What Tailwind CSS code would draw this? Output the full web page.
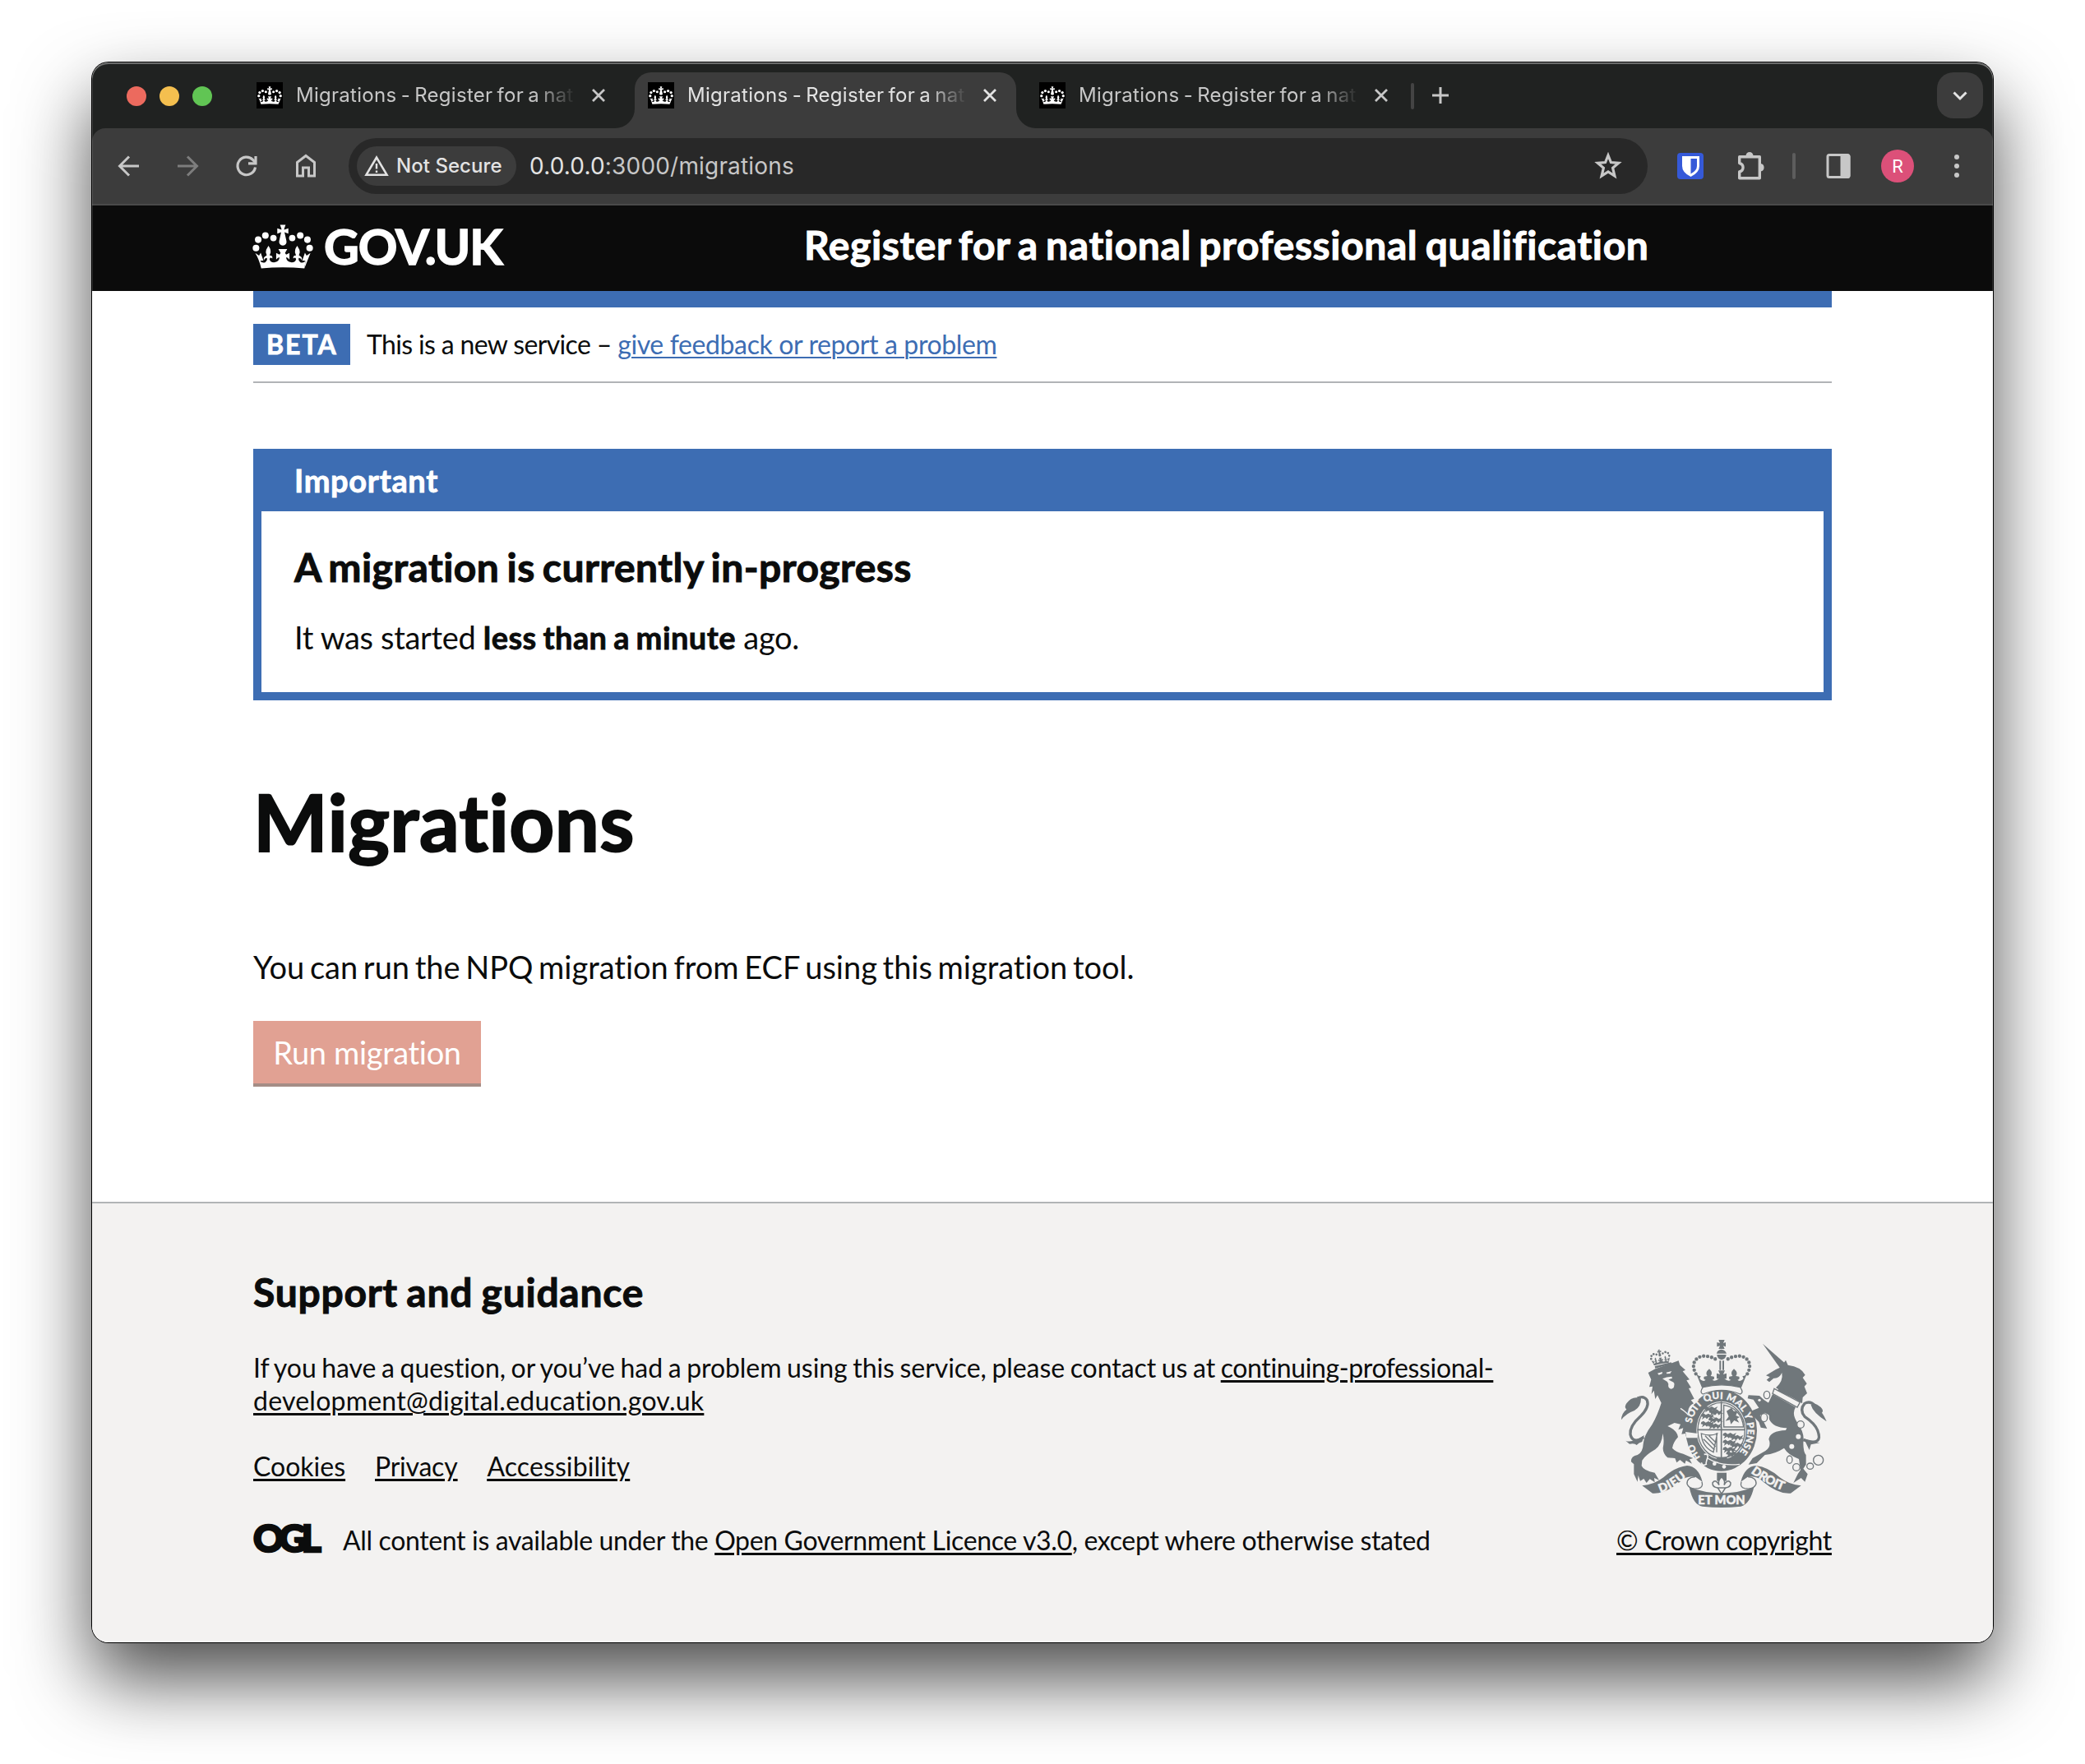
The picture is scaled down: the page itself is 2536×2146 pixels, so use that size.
<!DOCTYPE html>
<html lang="en">
<head>
<meta charset="utf-8">
<title>Migrations - Register for a national professional qualification</title>
<script src="https://cdn.jsdelivr.net/npm/@tailwindcss/browser@4"></script>
</head>
<body class="bg-white overflow-hidden">
<!-- shared symbols -->
<svg width="0" height="0" class="absolute">
  <symbol id="crown" viewBox="22 39 220 160">
    <g fill="currentColor">
      <circle cx="35" cy="124" r="12"/><circle cx="43" cy="94" r="12"/><circle cx="69" cy="79" r="12"/><circle cx="98" cy="88" r="11.5"/>
      <circle cx="166" cy="88" r="11.5"/><circle cx="195" cy="79" r="12"/><circle cx="221" cy="94" r="12"/><circle cx="229" cy="124" r="12"/>
      <path d="M122 40h20l-5 14v4l15-5v19l-14-5 7 31a13.500 13.500 0 1 1-26 0l7-31-14 5V53l15 5v-4z"/>
      <path d="M54 198Q132 190 210 198L214 172Q206 180 196 176Q186 168 190 160Q198 160 200 168Q204 158 194 153L190 150Q196 140 192 130L184 116Q172 132 178 146L180 151Q168 150 170 162Q178 156 180 164Q178 176 164 176Q144 174 144 158Q150 158 156 166V142L144 148L140 142L148 128H116L124 142L120 148L108 142V166Q114 158 120 158Q120 174 100 176Q86 176 84 164Q86 156 94 162Q96 150 84 151L86 146Q92 132 80 116L72 130Q68 140 74 150L70 153Q60 158 64 168Q66 160 74 160Q78 168 68 176Q58 180 50 172Q54 168 62 170L52 141L46 152L32 142Q46 164 54 198Z"/>
      <path d="M210 198L232 142L218 152L212 141L202 170Q210 168 214 172Z"/>
    </g>
  </symbol>
  <symbol id="x" viewBox="0 0 32 32"><path d="M9 9L23 23M23 9L9 23" stroke="currentColor" stroke-width="2.800" fill="none"/></symbol>
</svg>

<div class="w-[2536px] h-[2146px] pt-[76px] pl-[112px] overflow-hidden">
<div class="w-[2312px] h-[1922px] rounded-[20px] shadow-[0_0_0_1px_#000,0_45px_90px_rgba(0,0,0,0.7)] bg-white">
<div class="relative w-full h-full rounded-[20px] overflow-hidden flex flex-col font-[Lato,sans-serif] text-[#0b0c0c]">

  <!-- tab strip -->
  <div class="h-20 bg-[#202221] flex items-center pl-[42px] font-[Inter,sans-serif] text-[24px] tracking-[0.28px] [word-spacing:-1.8px] text-[#c7c7c7] shrink-0">
    <div class="flex gap-4 pt-[2px]">
      <div class="size-6 rounded-full bg-[#ec6a5e]"></div>
      <div class="size-6 rounded-full bg-[#f4bf4f]"></div>
      <div class="size-6 rounded-full bg-[#61c554]"></div>
    </div>
    <div class="ml-[38px] flex gap-3 self-end">
      <div class="w-[464px] h-[68px] pl-4 pb-3 flex items-center">
        <div class="size-8 bg-black flex items-center justify-center text-white"><svg class="w-[30px] h-[22px]"><use href="#crown"/></svg></div>
        <div class="ml-[16px] w-[337px] whitespace-nowrap [mask-image:linear-gradient(to_right,#000_86%,transparent_101%)]">Migrations - Register for a nat</div>
        <svg class="size-8 ml-[15px]"><use href="#x"/></svg>
      </div>
      <div class="relative w-[464px] h-[68px] pl-4 pb-3 flex items-center bg-[#3c3c3c] rounded-t-[20px] text-[#e3e3e3]">
        <svg class="absolute -left-6 bottom-0 size-6" viewBox="0 0 24 24"><path d="M24 0V24H0A24 24 0 0 0 24 0Z" fill="#3c3c3c"/></svg>
        <svg class="absolute -right-6 bottom-0 size-6" viewBox="0 0 24 24"><path d="M0 0V24H24A24 24 0 0 1 0 0Z" fill="#3c3c3c"/></svg>
        <div class="size-8 bg-black flex items-center justify-center text-white"><svg class="w-[30px] h-[22px]"><use href="#crown"/></svg></div>
        <div class="ml-[16px] w-[337px] whitespace-nowrap [mask-image:linear-gradient(to_right,#000_86%,transparent_101%)]">Migrations - Register for a nat</div>
        <svg class="size-8 ml-[15px]"><use href="#x"/></svg>
      </div>
      <div class="w-[464px] h-[68px] pl-4 pb-3 flex items-center">
        <div class="size-8 bg-black flex items-center justify-center text-white"><svg class="w-[30px] h-[22px]"><use href="#crown"/></svg></div>
        <div class="ml-[16px] w-[337px] whitespace-nowrap [mask-image:linear-gradient(to_right,#000_86%,transparent_101%)]">Migrations - Register for a nat</div>
        <svg class="size-8 ml-[15px]"><use href="#x"/></svg>
      </div>
    </div>
    <div class="ml-1 w-1 h-8 rounded-full bg-[#444] mt-[2px]"></div>
    <svg class="ml-[16px] size-8" viewBox="0 0 32 32"><path d="M16 6V26M6 16H26" stroke="#c7c7c7" stroke-width="3" fill="none"/></svg>
    <div class="ml-auto mr-3 w-14 h-14 rounded-[20px] bg-[#3c3c3c] flex items-center justify-center">
      <svg class="size-8" viewBox="0 0 32 32"><path d="M8.500 12.500L16 20L23.500 12.500" stroke="#e3e3e3" stroke-width="3" fill="none"/></svg>
    </div>
  </div>

  <!-- toolbar -->
  <div class="h-[94px] bg-[#202221] shrink-0">
  <div class="h-full bg-[#3c3c3c] rounded-t-[16px] border-b-2 border-[#4a4a4a] flex items-center pl-7 text-[#c7c7c7] font-[Inter,sans-serif]">
    <div class="flex gap-10">
      <svg class="size-8" viewBox="0 0 32 32" fill="none" stroke="currentColor" stroke-width="3"><path d="M29 16H6M17 4.500L5.500 16L17 27.500"/></svg>
      <svg class="size-8 text-[#7d7d7d]" viewBox="0 0 32 32" fill="none" stroke="currentColor" stroke-width="3"><path d="M4 16H27M16 4.500L27.500 16L16 27.500"/></svg>
      <svg class="size-8" viewBox="0 0 32 32" fill="none" stroke="currentColor" stroke-width="3.200"><path d="M26.500 17.500A10.800 10.800 0 1 1 23.500 8.300L26.500 11.500"/><path d="M27 4V12.800H18"/></svg>
      <svg class="size-8" viewBox="0 0 32 32" fill="none" stroke="currentColor" stroke-width="3"><path d="M5.500 28V11.500L16 3.500L26.500 11.500V28H19.500V18H12.500V28Z"/></svg>
    </div>
    <div class="ml-9 w-[1580px] h-[68px] rounded-full bg-[#282828] flex items-center pl-[10px] pr-[31px]">
      <div class="w-[194px] h-12 rounded-full bg-[#3c3c3c] flex items-center pl-2 text-[#e3e3e3]">
        <svg class="w-8 h-8" viewBox="0 0 32 32" fill="none" stroke="currentColor" stroke-width="2.600"><path d="M3.500 26.700H28.500L16 5.500Z"/><path d="M16 13V19.500M16 21.500V24" stroke-width="2.400"/></svg>
        <span class="ml-[8px] text-[24px] tracking-[0.05px] font-medium whitespace-nowrap">Not Secure</span>
      </div>
      <div class="ml-4 text-[28px] tracking-[0.18px] whitespace-nowrap"><span class="text-[#e3e3e3]">0.0.0.0</span>:3000/migrations</div>
      <svg class="ml-auto size-[34px]" viewBox="0 0 34 34" fill="none" stroke="currentColor" stroke-width="3.200"><path d="M17 4L20.400 12.600L29.700 13.300L22.600 19.300L24.900 29L17 23.800L9.100 29L11.400 19.300L4.300 13.300L13.600 12.600Z"/></svg>
    </div>
    <svg class="ml-[36px] size-8" viewBox="0 0 32 32"><rect width="32" height="32" rx="4" fill="#3559d8"/><path d="M6 4H27V16Q27 24 16.500 29Q6 24 6 16Z" fill="#fff"/><path d="M16.500 7H24V16Q24 21.500 16.500 25.500Z" fill="#3559d8"/></svg>
    <svg class="ml-10 size-9" viewBox="0 0 36 36"><path d="M3.700 6.700H28.300V32.800H3.700V25C9.500 23.500 9.500 16 3.700 14.500Z" fill="none" stroke="currentColor" stroke-width="3.400" stroke-linejoin="round"/><path d="M11.500 5.500A4.500 4.500 0 0 1 20.500 5.500ZM29.500 15A4.800 4.800 0 0 1 29.500 24.500Z" fill="currentColor"/></svg>
    <div class="ml-8 w-1 h-8 rounded-full bg-[#5d5d5d]"></div>
    <svg class="ml-[36px] size-8" viewBox="0 0 32 32"><rect x="3" y="2.500" width="26" height="27" rx="2" fill="none" stroke="currentColor" stroke-width="3"/><path d="M18.500 1.500H27A3 3 0 0 1 30.500 4V28A3 3 0 0 1 27 31H18.500Z" fill="currentColor"/></svg>
    <div class="ml-9 size-10 rounded-full bg-[#dc5079] flex items-center justify-center text-white text-[22px] font-[Roboto,sans-serif]">R</div>
    <div class="ml-[49px] flex flex-col gap-[5px]"><div class="size-[6px] rounded-full bg-[#c7c7c7]"></div><div class="size-[6px] rounded-full bg-[#c7c7c7]"></div><div class="size-[6px] rounded-full bg-[#c7c7c7]"></div></div>
  </div>
  </div>

  <!-- site header -->
  <header class="h-[104px] bg-[#0b0b0b] text-white flex items-center pl-[195px] font-bold shrink-0 [-webkit-text-stroke:1px]">
    <svg class="w-[74px] h-[54px] -mt-[5px]"><use href="#crown"/></svg>
    <span class="ml-[13px] w-[584px] pb-[8px] text-[59px] leading-[96px] tracking-[-1.1px] mt-1 [-webkit-text-stroke:1.5px]">GOV.UK</span>
    <span class="pb-[8px] text-[48px] tracking-[0.6px] [word-spacing:-3px] whitespace-nowrap">Register for a national professional qualification</span>
  </header>

  <main class="px-[196px] h-[1108px] shrink-0">
    <div class="h-5 bg-[#3d6db3]"></div>
    <div class="h-[92px] border-b-2 border-[#b1b4b6] flex items-center text-[32px] whitespace-nowrap">
      <strong class="w-[118px] h-[50px] bg-[#3d6db3] text-white pl-4 leading-[50px] tracking-[2px] [-webkit-text-stroke:0.8px]">BETA</strong>
      <span class="ml-5 -mt-[1px]"><span class="tracking-[-0.65px]">This is a new service – </span><a class="text-[#3d6db3] tracking-[-0.38px] underline decoration-2 underline-offset-[3px]">give feedback or report a problem</a></span>
    </div>

    <section class="mt-20 border-[10px] border-t-0 border-[#3d6db3] h-[306px]">
      <h2 class="h-[76px] bg-[#3d6db3] text-white text-[38px] font-bold leading-[76px] pl-10 tracking-[0.65px] [-webkit-text-stroke:0.8px]">Important</h2>
      <div class="pl-10 pt-[38px]">
        <p class="text-[48px] leading-[60px] font-bold tracking-[0.45px] [word-spacing:-3px] [-webkit-text-stroke:1px]">A migration is currently in-progress</p>
        <p class="mt-[30px] text-[38px] leading-[50px] tracking-[-0.33px]">It was started <b class="tracking-[0.45px] [word-spacing:-2px] [-webkit-text-stroke:0.8px]">less than a minute</b> ago.</p>
      </div>
    </section>

    <h1 class="mt-[97px] text-[96px] leading-[100px] font-bold tracking-[0.4px] [-webkit-text-stroke:2px]">Migrations</h1>
    <p class="mt-[102px] text-[38px] leading-[50px] tracking-[-0.02px] [word-spacing:-3px]">You can run the NPQ migration from ECF using this migration tool.</p>
    <button class="mt-[41px] block w-[277px] h-[76px] bg-[#e1a193] shadow-[0_4px_0_#a58d86] text-white text-[38px] leading-[75px] tracking-[-0.35px] whitespace-nowrap">Run migration</button>
  </main>

  <footer class="grow bg-[#f3f2f1] border-t-2 border-[#b1b4b6] pl-[196px] pr-[196px] pt-[78px] flex text-[32px] leading-10 whitespace-nowrap">
    <div>
      <h2 class="text-[48px] leading-[60px] font-bold tracking-[0.73px] [word-spacing:-2px] [-webkit-text-stroke:1px]">Support and guidance</h2>
      <p class="mt-[42px] tracking-[-0.07px] [word-spacing:-1.45px]">If you have a question, or you’ve had a problem using this service, please contact us at <a class="tracking-[-0.38px] underline decoration-[3px] underline-offset-[3px]">continuing-professional-<br><span class="tracking-[0.23px]">development@digital.education.gov.uk</span></a></p>
      <div class="mt-[40px] flex gap-[36px] underline decoration-[3px] underline-offset-[3px]">
        <a>Cookies</a><a class="tracking-[-0.25px]">Privacy</a><a class="tracking-[0.11px]">Accessibility</a>
      </div>
      <div class="mt-[50px] flex">
        <span class="w-[109px] text-[46px] leading-[34px] font-black tracking-[-6px] [-webkit-text-stroke:2.5px]">OGL</span>
        <span class="tracking-[-0.35px]">All content is available under the <a class="underline decoration-[3px] underline-offset-[3px]">Open Government Licence v3.0</a>, except where otherwise stated</span>
      </div>
    </div>
    <div class="ml-auto pt-[88px] w-[262px] flex flex-col">
      <!-- royal arms -->
      <svg class="w-[262px] h-[204px]" viewBox="18 30 786 612" font-family="Lato" font-weight="900" fill="#70777b" color="#70777b">
        <defs>
          <path id="garter" d="M309 424A98 113 0 0 1 401 246A98 113 0 1 1 380 470"/>
          <path id="garterL" d="M346 480A104 120 0 0 1 298 370"/>
          <path id="dieu" d="M178 588Q230 572 285 522"/><path id="droit" d="M508 514Q570 562 644 586"/>
          <path id="quad" d="M0 4l8-4 8 6 10-5 10 6 12-6-6 10 10 6-12-2-6 6-6-8-8 8-6-6-12 8 4-10-8-2z"/>
        </defs>
        <!-- lion -->
        <svg x="136" y="58" width="84" height="66" viewBox="0 0 84 66"><g transform="rotate(-10 42 36)"><use href="#crown" x="4" y="6" width="76" height="56"/></g></svg>
        <path d="M158 126L218 112L220 118L160 134Z"/>
        <path d="M134 150L160 136L245 106L250 122L270 140L260 145L285 175L274 178L291 205L282 207L302 245L290 250L300 262Q275 275 282 300L305 330L312 375L300 370L298 388L286 374L274 388L270 372L256 374L262 352L244 358L252 338L230 333L205 345Q240 360 243 385Q225 405 222 425Q235 440 262 446L298 462L285 466L294 482L272 470L268 482L250 468L238 478L232 462L205 460Q188 445 188 425Q194 395 187 372Q185 410 160 430Q125 450 112 470L110 490Q118 508 158 515L174 542L156 534L158 550L140 538L128 552L118 537L105 545L98 525L95 548L82 520L82 484L72 475Q70 455 95 450Q115 440 116 410Q118 380 148 340Q168 305 182 260L168 232L160 246L155 215L146 228L150 200L138 202L145 175Z"/>
        <g fill="#f3f2f1"><path d="M168 152l18-5-1 7-12 4zM200 149l20-5-6 9-12 1zM186 172q14-8 34-8l2 6-14 5 10 6q14 4 11 14 0 14-12 14-12-4-9-18l-4-8z"/></g>
        <path d="M252 280Q300 310 312 370" fill="none" stroke="#f3f2f1" stroke-width="4"/>
        <path d="M118 385Q78 412 69 375Q66 345 105 310Q140 275 130 250Q118 232 95 243" fill="none" stroke="#70777b" stroke-width="10"/>
        <path d="M36 322Q36 298 55 284Q45 276 55 262Q76 232 108 244Q108 275 84 288Q54 298 36 322ZM52 398Q75 408 120 378L112 402Q100 405 92 414Q85 406 66 410Z"/>
        <!-- unicorn -->
        <path d="M552 44L636 118L616 134Z"/>
        <path d="M564 160L600 138L618 130L636 104L644 122Q692 128 707 158L698 168L713 190L704 200L714 225L698 240L696 262L600 205Q628 180 622 150Q612 172 592 170L576 184L566 176L578 166Z"/>
        <path d="M594 208L688 258L678 276L588 226Z" fill="none" stroke="#70777b" stroke-width="4"/>
        <path d="M606 216l6-12 8 10 8-8 6 18 12-10 6 18 12-8 4 20z"/>
        <path d="M588 228L672 276Q656 300 680 335Q706 370 700 405Q700 440 710 450L710 485L700 500L716 520L706 548L692 534L664 552L680 520L690 505L684 465Q645 450 630 425Q600 445 560 450L530 480L500 485L515 462L562 435Q585 420 574 392Q580 362 636 360L640 352Q590 350 576 320L572 262Z"/>
        <path d="M576 262Q555 250 540 234L500 232L497 244L518 248L538 278L514 288L510 300L538 330L545 350L568 354L556 330L542 306L560 296L584 310Z"/>
        <path d="M700 395Q775 420 752 360Q742 335 705 310Q685 285 705 262Q725 250 745 272" fill="none" stroke="#70777b" stroke-width="10"/>
        <path d="M785 328Q776 306 768 296Q776 288 764 276Q740 255 728 268Q735 296 785 328ZM702 390L722 432L728 412L760 406L735 402Z"/>
        <g fill="none" stroke="#70777b" stroke-width="4"><ellipse cx="567" cy="231" rx="11" ry="14"/><ellipse cx="557" cy="314" rx="12" ry="15" fill="#f3f2f1"/><circle cx="690" cy="339" r="13" fill="#f3f2f1"/><ellipse cx="650" cy="467" rx="10" ry="14"/><circle cx="675" cy="495" r="13"/><circle cx="755" cy="469" r="18"/><ellipse cx="725" cy="491" rx="12" ry="11"/></g>
        <g fill="#f3f2f1"><circle cx="682" cy="383" r="9"/><circle cx="658" cy="419" r="9"/><circle cx="540" cy="250" r="5"/></g>
        <!-- crown -->
        <path d="M391 30h22l-5 12 9-3v16l-9-3 5 11h-22l5-11-11 3V39l11 3zM384 80Q386 66 401 65Q416 66 420 80ZM385 84H419Q418 100 402 103Q386 100 385 84ZM394 106h6v34h-6zM405 106h6v34h-6z"/>
        <g fill="none" stroke="#70777b" stroke-width="13" stroke-linecap="round" stroke-dasharray="0 14.500"><path d="M308 154C284 110 316 84 350 90Q374 94 384 104"/><path d="M496 154C520 110 488 84 454 90Q430 94 420 104"/></g>
        <path d="M308 150Q316 164 326 162L322 172Q334 186 344 176Q334 174 338 164L350 162Q340 150 357 136Q372 150 362 162L374 164Q378 174 368 176Q378 184 392 172L384 172V152L396 156L390 142H414L408 156L420 152V172L412 172Q426 184 436 176Q426 174 430 164L442 162Q432 150 447 136Q464 150 454 162L466 164Q470 174 460 176Q470 186 482 172L478 162Q488 164 496 150L474 204Q402 186 330 204Z"/>
        <path d="M334 203Q402 186 470 203Q484 224 470 228Q402 200 334 228Q320 222 334 203Z" fill="#f3f2f1" stroke="#70777b" stroke-width="4"/>
        <!-- garter and shield -->
        <ellipse cx="401" cy="361" rx="130" ry="148"/>
        <ellipse cx="401" cy="360" rx="91" ry="106" fill="#f3f2f1"/>
        <ellipse cx="401" cy="360" rx="86" ry="101" fill="none" stroke="#70777b" stroke-width="4"/>
        <path d="M401 256V464M314 358H488" stroke="#70777b" stroke-width="5"/>
        <path d="M410 348V268Q474 280 482 348Z" fill="none" stroke="#70777b" stroke-width="4"/>
        <use href="#quad" x="340" y="272"/><use href="#quad" x="328" y="298"/><use href="#quad" x="328" y="326"/><use href="#quad" x="358" y="284"/><use href="#quad" x="356" y="312"/><use href="#quad" x="354" y="334"/>
        <use href="#quad" x="408" y="368"/><use href="#quad" x="408" y="394"/><use href="#quad" x="408" y="420"/><use href="#quad" x="434" y="376"/><use href="#quad" x="434" y="404"/><use href="#quad" x="420" y="436"/>
        <path d="M420 290l18-12 8 12 14 2-6 14 14 6-10 6 8 14-18-8-12 14-4-16-16 4 12-16z"/>
        <path d="M328 372Q330 420 372 440L386 372Q360 384 328 372ZM342 380L380 420M356 380L382 406M336 392L376 432M384 370V440" fill="none" stroke="#70777b" stroke-width="4"/>
        <path d="M388 458H420L432 482L376 472Z"/>
        <g fill="#f3f2f1" stroke="#f3f2f1" stroke-width="1" font-size="35"><text><textPath href="#garter" startOffset="92" textLength="405">SOIT QUI MAL Y PENSE</textPath></text></g>
        <path d="M270 366L316 372L312 388L274 388Z" fill="#f3f2f1"/>
        <g fill="#f3f2f1" stroke="#f3f2f1" stroke-width="1" font-size="35"><text><textPath href="#garterL" startOffset="30">HO</textPath></text></g>
        <path d="M338 448q18-4 12 14t-4 22q-14 8-18-6" fill="#70777b" stroke="#f3f2f1" stroke-width="5"/>
        <path d="M350 462Q400 492 468 484" fill="none" stroke="#f3f2f1" stroke-width="4"/>
        <g fill="#f3f2f1"><circle cx="376" cy="482" r="7"/><circle cx="411" cy="493" r="7"/></g>
        <!-- pendant -->
        <path d="M385 515H420V545H385Z"/>
        <path d="M402 530Q418 546 411 560Q424 536 435 552Q436 568 416 570L402 592L388 570Q368 568 369 552Q380 536 393 560Q386 546 402 530ZM384 570H420" fill="#f3f2f1" stroke="#70777b" stroke-width="4.500"/>
        <!-- scroll -->
        <path d="M112 562L150 590Q195 594 250 548Q275 524 306 530L332 548Q318 492 276 489Q232 494 190 532Q154 560 112 562Z"/>
        <path d="M692 562L654 590Q609 594 554 548Q529 524 498 530L472 548Q486 492 528 489Q572 494 614 532Q650 560 692 562Z"/>
        <path d="M306 530Q274 532 276 556Q284 578 318 572Q336 568 330 548M498 530Q530 532 528 556Q520 578 486 572Q468 568 474 548" fill="#f3f2f1" stroke="#70777b" stroke-width="4"/>
        <path d="M284 568Q298 634 332 638Q402 646 472 638Q506 630 520 568Q402 612 284 568Z"/>
        <g fill="#f3f2f1" stroke="#f3f2f1" stroke-width="1.500" font-size="44"><text><textPath href="#dieu" textLength="112">DIEU</textPath></text><text><textPath href="#droit" textLength="134">DROIT</textPath></text><text x="402" y="631" text-anchor="middle" textLength="172">ET MON</text></g>
      </svg>
      <a class="mt-[20px] tracking-[-0.38px] underline decoration-[3px] underline-offset-[3px]">© Crown copyright</a>
    </div>
  </footer>
  <!-- top edge highlight -->
  <div class="absolute inset-0 rounded-[20px] pointer-events-none shadow-[inset_0_2px_0_rgba(255,255,255,0.3),inset_0_0_0_1px_rgba(255,255,255,0.15)]"></div>
</div>
</div>
</div>
</body>
</html>
